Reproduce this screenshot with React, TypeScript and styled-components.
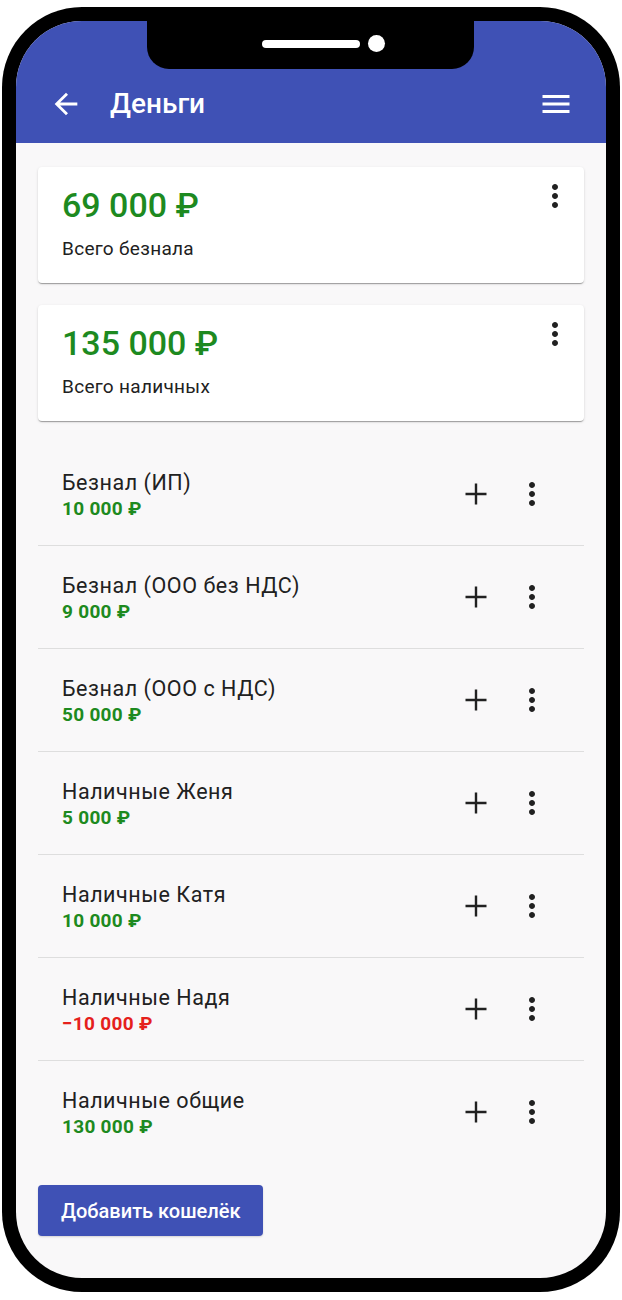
import React from "react";
import styled, { createGlobalStyle } from "styled-components";

const Global = createGlobalStyle`
  html, body { margin: 0; padding: 0; background: #ffffff; }
  body { font-family: Roboto, "Noto Sans", "Liberation Sans", sans-serif; -webkit-font-smoothing: antialiased; }
  * { box-sizing: border-box; }
`;

const GREEN = "#1d8a20";
const RED = "#e5201c";
const INDIGO = "#3f51b5";

const Phone = styled.div`
  margin: 7px 0 0 2px;
  width: 618px;
  height: 1285px;
  padding: 14px;
  background: #000;
  border-radius: 80px;
`;

const Screen = styled.div`
  position: relative;
  height: 100%;
  border-radius: 66px;
  overflow: hidden;
  background: #f9f8f9;
  display: flex;
  flex-direction: column;
`;

const Notch = styled.div`
  position: absolute;
  top: 0;
  left: 131px;
  width: 327px;
  height: 48px;
  background: #000;
  border-radius: 0 0 22px 22px;
  display: flex;
  align-items: center;
  gap: 8px;
  padding: 0 0 3px 115px;
`;

const Speaker = styled.span`
  width: 98px;
  height: 8px;
  border-radius: 4px;
  background: #fff;
`;

const Camera = styled.span`
  width: 17px;
  height: 17px;
  border-radius: 50%;
  background: #fff;
`;

const AppBar = styled.header`
  height: 122px;
  flex: none;
  background: ${INDIGO};
  color: #fff;
  display: flex;
  align-items: center;
  padding: 59px 32px 15px 33px;
`;

const Title = styled.h1`
  margin: 0 0 0 27px;
  flex: 1;
  font-size: 28px;
  font-weight: 500;
  line-height: 32px;
`;

const Icon = styled.svg<{ $size: number }>`
  width: ${(p) => p.$size}px;
  height: ${(p) => p.$size}px;
  flex: none;
  display: block;
`;

const Content = styled.main`
  display: flex;
  flex-direction: column;
  gap: 22px;
  padding: 24px 22px 0;
`;

const SummaryCard = styled.section`
  height: 116px;
  background: #fff;
  border-radius: 4px;
  box-shadow: 0 2px 1px -1px rgba(0, 0, 0, 0.2), 0 1px 1px 0 rgba(0, 0, 0, 0.14),
    0 1px 3px 0 rgba(0, 0, 0, 0.12);
  display: flex;
  justify-content: space-between;
  align-items: flex-start;
  padding: 11px 11px 0 24px;
`;

const SummaryText = styled.div`
  padding-top: 8px;
  display: flex;
  flex-direction: column;
  gap: 13px;
`;

const BigAmount = styled.div`
  font-size: 34px;
  font-weight: 500;
  line-height: 38px;
  color: ${GREEN};
`;

const Caption = styled.div`
  font-size: 19px;
  letter-spacing: 0.3px;
  line-height: 24px;
  color: #212121;
`;

const WalletList = styled.ul`
  list-style: none;
  margin: 0;
  padding: 0;
`;

const WalletRow = styled.li`
  height: 103px;
  display: flex;
  align-items: center;
  gap: 20px;
  padding: 0 34px 0 24px;
  border-bottom: 1px solid #dedede;
  &:last-child {
    height: 102px;
    border-bottom: none;
  }
`;

const WalletText = styled.div`
  flex: 1;
  display: flex;
  flex-direction: column;
  gap: 3px;
  padding-top: 3px;
`;

const WalletName = styled.div`
  font-size: 21.5px;
  letter-spacing: 0.55px;
  line-height: 24px;
  color: #212121;
`;

const WalletAmount = styled.div<{ $negative?: boolean }>`
  font-size: 19px;
  letter-spacing: 0.3px;
  font-weight: 700;
  line-height: 22px;
  color: ${(p) => (p.$negative ? RED : GREEN)};
`;

const AddButton = styled.button`
  align-self: flex-start;
  height: 51px;
  padding: 0 23px;
  border: none;
  border-radius: 4px;
  background: ${INDIGO};
  color: #fff;
  font-family: inherit;
  font-size: 20px;
  font-weight: 500;
  box-shadow: 0 1px 2px rgba(0, 0, 0, 0.15);
`;

const BackIcon = () => (
  <Icon $size={34} viewBox="0 0 24 24" fill="#fff">
    <path d="M20 11H7.83l5.59-5.59L12 4l-8 8 8 8 1.41-1.41L7.83 13H20v-2z" />
  </Icon>
);

const MenuIcon = () => (
  <Icon $size={36} viewBox="0 0 24 24" fill="#fff">
    <path d="M3 18h18v-2H3v2zm0-5h18v-2H3v2zm0-7v2h18V6H3z" />
  </Icon>
);

const MoreIcon = () => (
  <Icon $size={36} viewBox="0 0 24 24" fill="#212121">
    <path d="M12 8c1.1 0 2-.9 2-2s-.9-2-2-2-2 .9-2 2 .9 2 2 2zm0 2c-1.1 0-2 .9-2 2s.9 2 2 2 2-.9 2-2-.9-2-2-2zm0 6c-1.1 0-2 .9-2 2s.9 2 2 2 2-.9 2-2-.9-2-2-2z" />
  </Icon>
);

const PlusIcon = () => (
  <Icon $size={36} viewBox="0 0 24 24" fill="#212121">
    <path d="M19 12.8h-6.2V19h-1.6v-6.2H5v-1.6h6.2V5h1.6v6.2H19v1.6z" />
  </Icon>
);

const summaries = [
  { amount: "69 000 ₽", label: "Всего безнала" },
  { amount: "135 000 ₽", label: "Всего наличных" },
];

const wallets = [
  { name: "Безнал (ИП)", amount: "10 000 ₽" },
  { name: "Безнал (ООО без НДС)", amount: "9 000 ₽" },
  { name: "Безнал (ООО с НДС)", amount: "50 000 ₽" },
  { name: "Наличные Женя", amount: "5 000 ₽" },
  { name: "Наличные Катя", amount: "10 000 ₽" },
  { name: "Наличные Надя", amount: "−10 000 ₽", negative: true },
  { name: "Наличные общие", amount: "130 000 ₽" },
];

export default function App() {
  return (
    <>
      <Global />
      <Phone>
        <Screen>
          <AppBar>
            <BackIcon />
            <Title>Деньги</Title>
            <MenuIcon />
          </AppBar>
          <Notch>
            <Speaker />
            <Camera />
          </Notch>
          <Content>
            {summaries.map((s) => (
              <SummaryCard key={s.label}>
                <SummaryText>
                  <BigAmount>{s.amount}</BigAmount>
                  <Caption>{s.label}</Caption>
                </SummaryText>
                <MoreIcon />
              </SummaryCard>
            ))}
            <WalletList>
              {wallets.map((w) => (
                <WalletRow key={w.name}>
                  <WalletText>
                    <WalletName>{w.name}</WalletName>
                    <WalletAmount $negative={w.negative}>{w.amount}</WalletAmount>
                  </WalletText>
                  <PlusIcon />
                  <MoreIcon />
                </WalletRow>
              ))}
            </WalletList>
            <AddButton>Добавить кошелёк</AddButton>
          </Content>
        </Screen>
      </Phone>
    </>
  );
}
